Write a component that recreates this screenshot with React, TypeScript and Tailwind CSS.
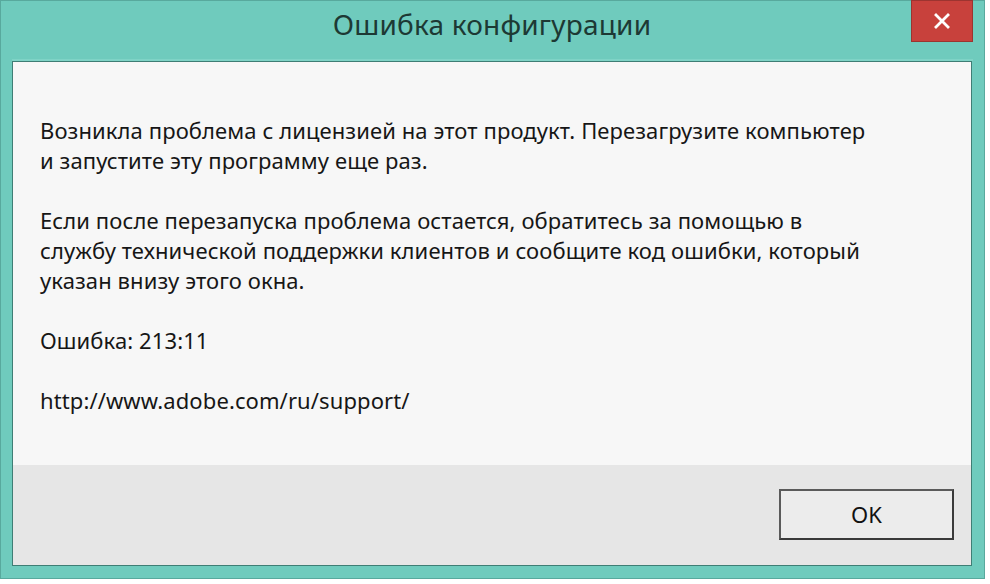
import React from "react";

export default function App() {
  return (
    <div className="w-[990px] h-[584px] bg-white overflow-hidden" style={{ fontFamily: '"Noto Sans", "Open Sans", sans-serif' }}>
      <div className="w-[985px] h-[579px] bg-[#6fcbbd] border border-[#58a99d] flex flex-col">
        {/* Title bar */}
        <div className="h-[58px] flex items-start">
          <div className="w-[72px]" />
          <div className="flex-1 h-[46px] flex items-center justify-center text-[28px] text-[#1d3934] tracking-[0.2px]">
            Ошибка конфигурации
          </div>
          <div className="w-[62px] h-[42px] mt-[-1px] bg-[#c8413c] border border-[#9c3430] flex items-center justify-center">
            <svg width="16" height="16" viewBox="0 0 16 16">
              <path d="M2 2 L14 14 M14 2 L2 14" stroke="#ffffff" strokeWidth="2.8" strokeLinecap="square" />
            </svg>
          </div>
          <div className="w-[11px]" />
        </div>
        <div className="h-[2px] mx-[11px] bg-[#7fd3c6]" />
        {/* Content */}
        <div className="flex-1 ml-[11px] mr-[12px] mb-[12px] border border-[#3f7e75] flex flex-col">
          <div className="flex-1 bg-[#f7f7f7] pl-[27px] pt-[53px] text-[22px] leading-[30px] text-[#161616] tracking-[0.1px]">
            <p>Возникла проблема с лицензией на этот продукт. Перезагрузите компьютер</p>
            <p>и запустите эту программу еще раз.</p>
            <p className="mt-[30px]">Если после перезапуска проблема остается, обратитесь за помощью в</p>
            <p>службу технической поддержки клиентов и сообщите код ошибки, который</p>
            <p>указан внизу этого окна.</p>
            <p className="mt-[30px]">Ошибка: 213:11</p>
            <p className="mt-[30px]">http://www.adobe.com/ru/support/</p>
          </div>
          <div className="h-[100px] bg-[#e6e6e6] flex justify-end items-start pt-[24px] pr-[17px]">
            <div className="w-[175px] h-[51px] bg-[#ececec] border-2 border-[#3a3a3a] border-t-[#5a5a5a] border-l-[#5a5a5a] flex items-center justify-center text-[22px] text-[#111]">
              OK
            </div>
          </div>
        </div>
      </div>
    </div>
  );
}
